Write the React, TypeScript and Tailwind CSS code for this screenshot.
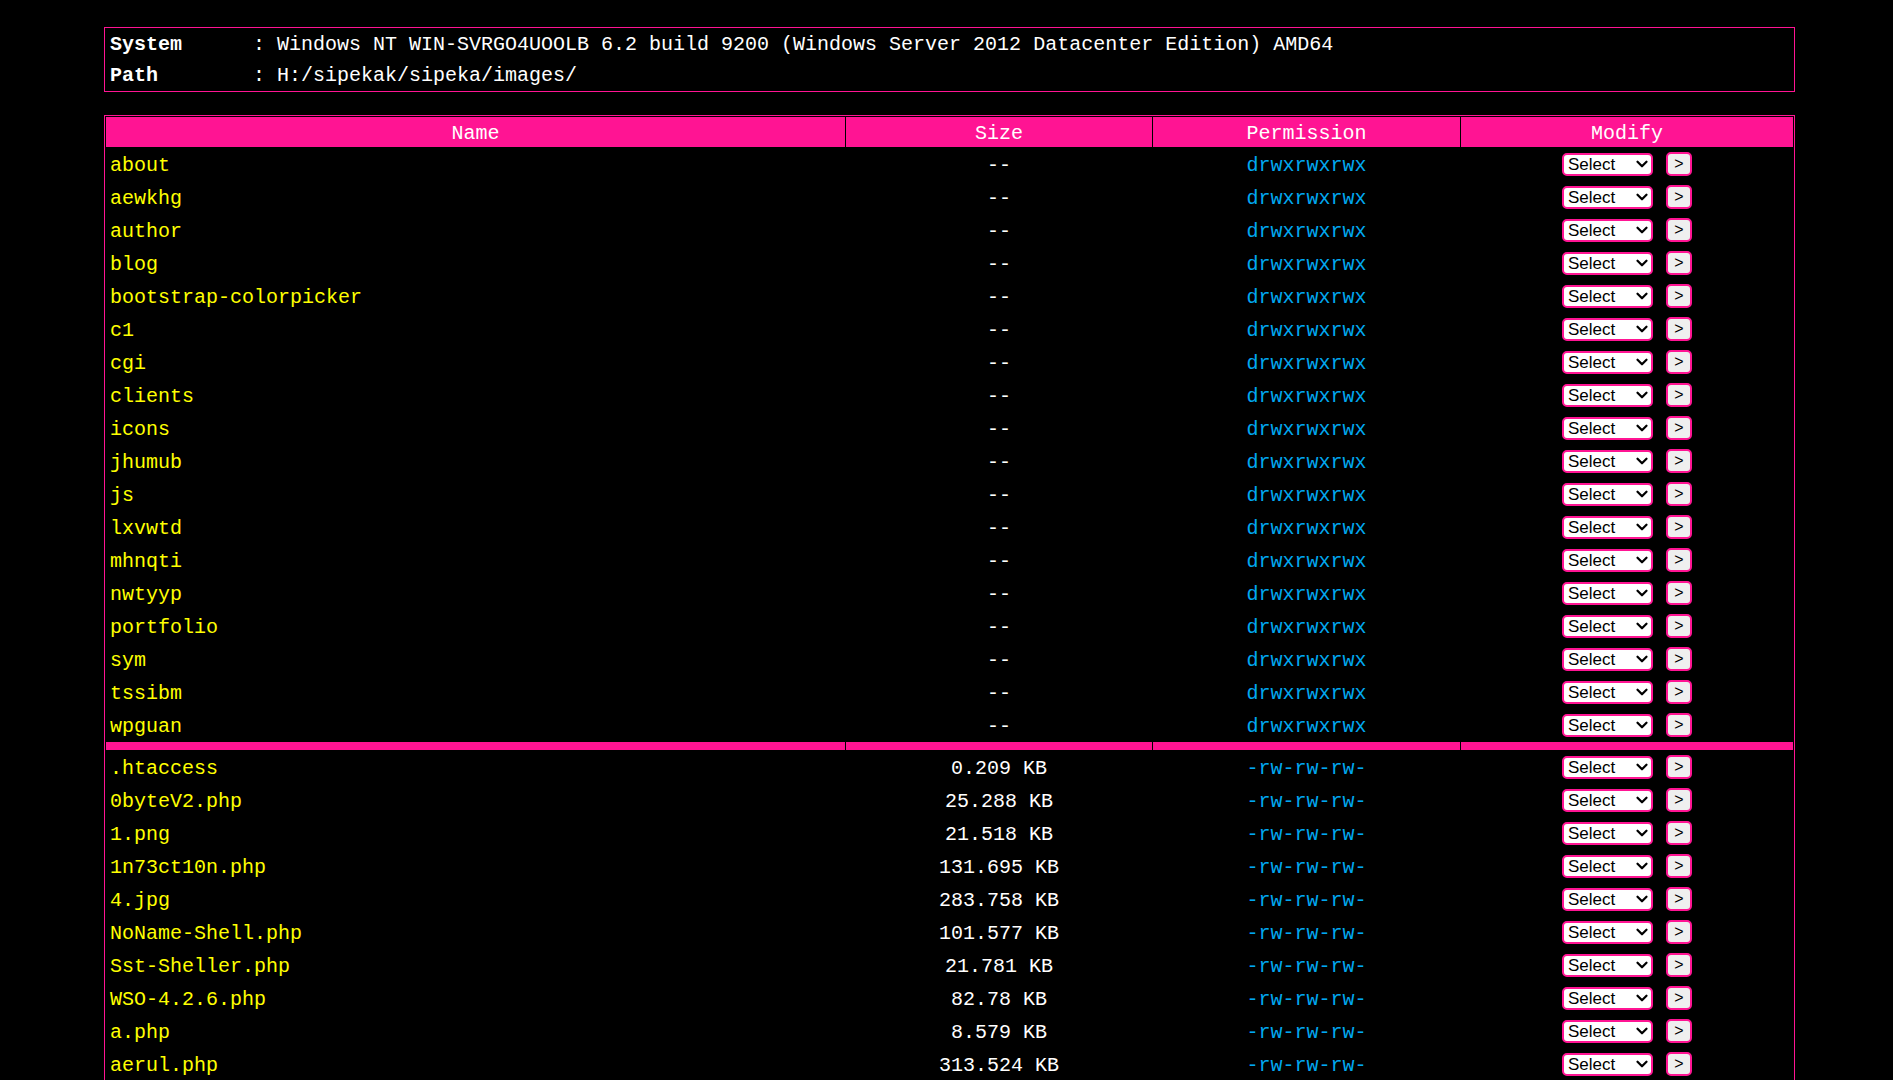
import React from 'react';
import { ChevronDown } from 'lucide-react';

const dirs = [
  'about', 'aewkhg', 'author', 'blog', 'bootstrap-colorpicker', 'c1', 'cgi', 'clients', 'icons',
  'jhumub', 'js', 'lxvwtd', 'mhnqti', 'nwtyyp', 'portfolio', 'sym', 'tssibm', 'wpguan',
];

const files = [
  { name: '.htaccess', size: '0.209 KB' },
  { name: '0byteV2.php', size: '25.288 KB' },
  { name: '1.png', size: '21.518 KB' },
  { name: '1n73ct10n.php', size: '131.695 KB' },
  { name: '4.jpg', size: '283.758 KB' },
  { name: 'NoName-Shell.php', size: '101.577 KB' },
  { name: 'Sst-Sheller.php', size: '21.781 KB' },
  { name: 'WSO-4.2.6.php', size: '82.78 KB' },
  { name: 'a.php', size: '8.579 KB' },
  { name: 'aerul.php', size: '313.524 KB' },
  { name: 'b374k.php', size: '154.211 KB' },
  { name: 'c99.php', size: '162.447 KB' },
];

function Modify() {
  return (
    <div className="flex items-center justify-center gap-[13px]">
      <div className="relative">
        <select
          defaultValue=""
          className="block w-[91px] h-[23px] appearance-none rounded-[5px] border-2 border-[#ff1493] bg-white pl-[4px] text-black text-[17px] leading-[19px] font-['Liberation_Sans',Arial,sans-serif]"
        >
          <option value="">Select</option>
          <option value="delete">Delete</option>
          <option value="chmod">Chmod</option>
          <option value="rename">Rename</option>
          <option value="edit">Edit</option>
        </select>
        <ChevronDown
          size={18}
          strokeWidth={3}
          className="pointer-events-none absolute right-[2px] top-[2px] text-black"
        />
      </div>
      <button className="w-[26px] h-[24px] rounded-[5px] border-2 border-[#ff1493] bg-[#efefef] text-black text-[16px] leading-none font-['Liberation_Sans',Arial,sans-serif]">
        &gt;
      </button>
    </div>
  );
}

function Row({ name, size, perm }: { name: string; size: string; perm: string }) {
  return (
    <tr className="h-[32px]">
      <td className="pl-[4px] pt-[3px] text-[#ffff00] align-middle">{name}</td>
      <td className="pt-[3px] text-center text-white align-middle">{size}</td>
      <td className="pt-[3px] text-center text-[#00a8f0] align-middle">{perm}</td>
      <td className="p-0 align-middle">
        <Modify />
      </td>
    </tr>
  );
}

export default function App() {
  return (
    <div className="min-h-screen bg-black pt-[27px] pb-[40px] pl-[104px] text-[20px] leading-[24px] text-white font-['Liberation_Mono','Courier_New',monospace]">
      {/* info box */}
      <div className="w-[1691px] border border-[#ff1493] pl-[5px] pb-[1px]">
        <div className="flex h-[31px] items-center pt-[3px]">
          <span className="w-[143px] font-bold">System</span>
          <span>: Windows NT WIN-SVRGO4UOOLB 6.2 build 9200 (Windows Server 2012 Datacenter Edition) AMD64</span>
        </div>
        <div className="flex h-[31px] items-center pt-[3px]">
          <span className="w-[143px] font-bold">Path</span>
          <span>: H:/sipekak/sipeka/images/</span>
        </div>
      </div>

      {/* file table */}
      <table className="mt-[23px] w-[1691px] table-fixed border-separate border-spacing-[1px] border border-[#ff1493]">
        <colgroup>
          <col className="w-[739px]" />
          <col className="w-[306px]" />
          <col className="w-[307px]" />
          <col className="w-[332px]" />
        </colgroup>
        <thead>
          <tr className="h-[30px] bg-[#ff1493]">
            <th className="pt-[3px] font-normal text-center">Name</th>
            <th className="pt-[3px] font-normal text-center">Size</th>
            <th className="pt-[3px] font-normal text-center">Permission</th>
            <th className="pt-[3px] font-normal text-center">Modify</th>
          </tr>
        </thead>
        <tbody>
          {dirs.map((d) => (
            <Row key={d} name={d} size="--" perm="drwxrwxrwx" />
          ))}
          <tr className="h-[8px]">
            <td className="bg-[#ff1493] p-0" />
            <td className="bg-[#ff1493] p-0" />
            <td className="bg-[#ff1493] p-0" />
            <td className="bg-[#ff1493] p-0" />
          </tr>
          {files.map((f) => (
            <Row key={f.name} name={f.name} size={f.size} perm="-rw-rw-rw-" />
          ))}
        </tbody>
      </table>
    </div>
  );
}
